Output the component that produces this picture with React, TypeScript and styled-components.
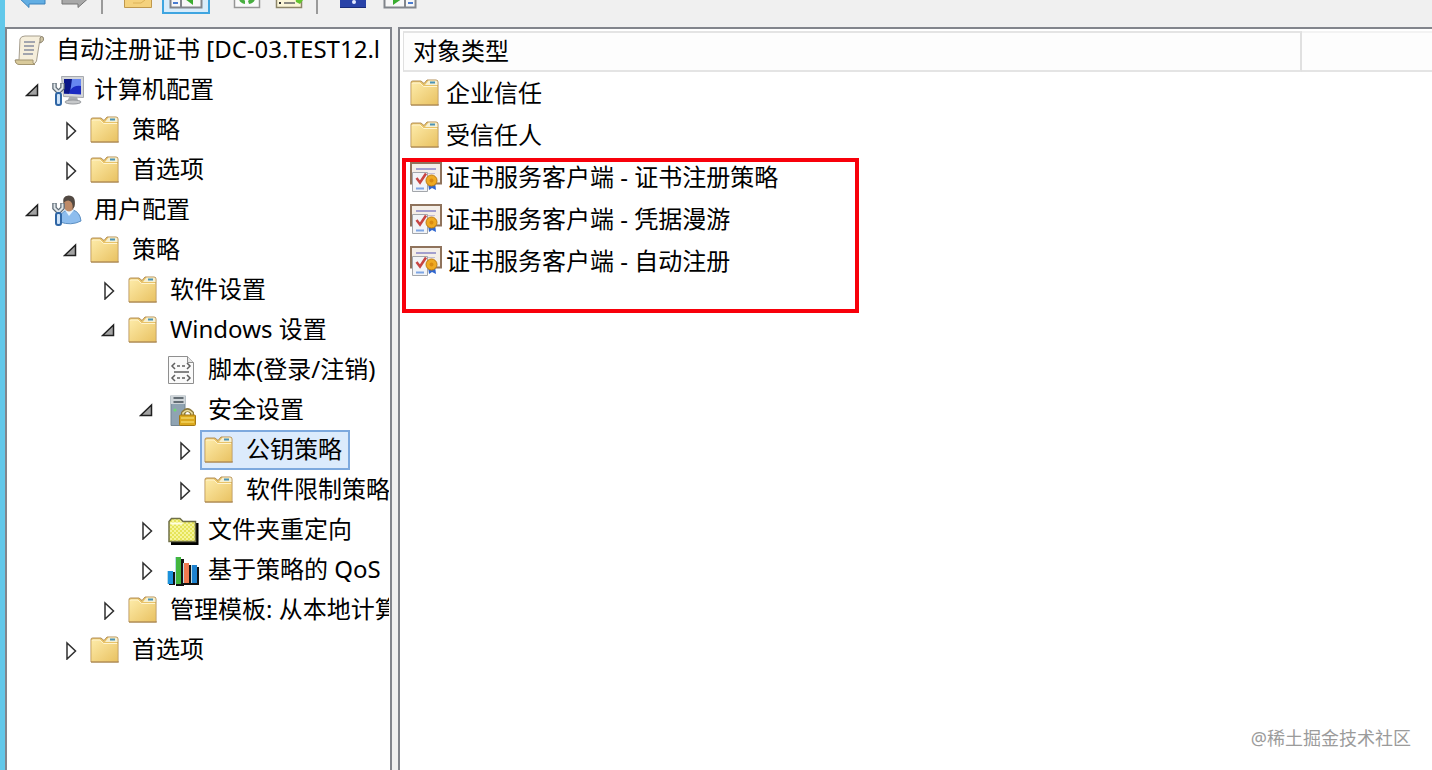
import React, { useState } from "react";
import styled, { createGlobalStyle, css } from "styled-components";

const GlobalStyle = createGlobalStyle`
  *, *::before, *::after { box-sizing: border-box; }
  body {
    margin: 0;
    background: #f0f0f0;
    color: #000;
    font-family: "Noto Sans", "Noto Sans CJK SC", sans-serif;
    font-size: 24px;
    line-height: 40px;
  }
`;

const Window = styled.div`
  position: relative;
  display: flex;
  flex-direction: column;
  height: 100vh;
  overflow: hidden;
  border-left: 5px solid #62c8ea;
`;

const Toolbar = styled.div`
  display: flex;
  flex: none;
  align-items: flex-end;
  height: 27px;
  padding: 0 5px 13px;
  overflow: hidden;
`;

const ToolGroup = styled.div<{ $gap?: number }>`
  display: flex;
  gap: ${(p) => p.$gap ?? 0}px;
  & + & { margin-left: 15px; }
`;

const ToolButton = styled.button<{ $active?: boolean }>`
  display: flex;
  justify-content: center;
  width: 44px;
  height: 44px;
  padding: 6px 0;
  border: 0;
  background: none;
  ${(p) =>
    p.$active &&
    css`
      width: 48px;
      padding: 4px 0;
      border: 2px solid #3fa5e0;
      background: #d9ecfa;
    `}
`;

const Separator = styled.div`
  width: 2px;
  height: 44px;
  margin: 0 13px 0 3px;
  background: #9a9a9a;
`;

const Panes = styled.div`
  display: flex;
  flex: 1;
  min-height: 0;
  gap: 6px;
`;

const TreePane = styled.nav`
  flex: none;
  width: 387px;
  padding: 1px 1px 0 0;
  background: #fff;
  border: solid #82858c;
  border-width: 2px 2px 0;
`;

const TreeClip = styled.div`
  overflow: hidden;
`;

const Branch = styled.ul`
  margin: 0;
  padding: 0;
  list-style: none;
`;

const TreeRow = styled.div<{ $level: number }>`
  display: flex;
  align-items: center;
  height: 40px;
  padding-left: ${(p) => (p.$level ? p.$level * 38 - 20 : 7)}px;
  white-space: nowrap;
`;

const Expander = styled.button`
  display: flex;
  flex: none;
  width: 20px;
  height: 20px;
  margin-right: 3px;
  padding: 0;
  border: 0;
  background: none;
`;

const ExpanderSpace = styled.span`
  flex: none;
  width: 23px;
`;

const NodeLabel = styled.a<{ $selected?: boolean; $root?: boolean }>`
  display: flex;
  align-items: center;
  gap: 10px;
  height: 40px;
  padding: 0 6px 0 ${(p) => (p.$root ? 0 : 4)}px;
  color: inherit;
  text-decoration: none;
  ${(p) =>
    p.$selected &&
    css`
      padding-left: 2px;
      border: 2px solid #7da9de;
      background: #dcebfc;
    `}
`;

const NodeName = styled.span`
  line-height: 38px;
  padding-bottom: 2px;
`;

const ListPane = styled.main`
  position: relative;
  flex: 1;
  min-width: 0;
  padding: 2px 0 0 3px;
  overflow: hidden;
  background: #fff;
  border: solid #82858c;
  border-width: 2px 0 0 2px;
`;

const ObjectTable = styled.table`
  width: 100%;
  table-layout: fixed;
  border-collapse: separate;
  border-spacing: 0;
`;

const HeaderCell = styled.th<{ $name?: boolean }>`
  width: ${(p) => (p.$name ? "899px" : "auto")};
  height: 41px;
  padding: 0 0 2px 9px;
  border-bottom: 2px solid #e4e4e4;
  border-top: 2px solid #f3f3f3;
  background: #fdfdfd;
  font-weight: 400;
  line-height: 34px;
  text-align: left;
  ${(p) =>
    p.$name &&
    css`
      border-right: 2px solid #e0e0e0;
      border-left: 1px solid #e0e0e0;
      border-top-color: #e4e4e4;
    `}
`;

const ObjectCell = styled.td`
  height: 42px;
  padding: 0 0 0 7px;
`;

const ObjectLink = styled.a`
  display: flex;
  align-items: center;
  gap: 4px;
  height: 42px;
  color: inherit;
  text-decoration: none;
  white-space: nowrap;
`;

const Highlight = styled.div`
  position: absolute;
  top: 129px;
  left: 2px;
  width: 457px;
  height: 155px;
  border: 4px solid #f8000a;
  pointer-events: none;
`;

const Watermark = styled.div`
  position: absolute;
  right: 21px;
  bottom: 20px;
  color: #9b9b9b;
  font-size: 18px;
  line-height: 24px;
`;

const Svg = styled.svg.attrs({ width: 32, height: 32, viewBox: "0 0 32 32", "aria-hidden": true })`
  flex: none;
  overflow: visible;
`;

const FolderIcon = () => (
  <Svg>
    <defs>
      <linearGradient id="folderFace" x1="0" y1="0" x2="1" y2="1">
        <stop offset="0" stopColor="#fdeba9" />
        <stop offset="1" stopColor="#e9c262" />
      </linearGradient>
    </defs>
    <path d="M1 28V5.500q0-1.500 1.500-1.500h8.500l3 2.500 3-3.500h9q2 0 2 2V28z" fill="#e8c368" stroke="#b4915a" />
    <path d="M16.500 6l2-2.500h7.500q1.500 0 1.500 1.500v3H15z" fill="#f6f0d2" />
    <path d="M20 5.500h5" stroke="#4b93b4" strokeWidth="2" />
    <path d="M1.500 27.500V7q0-1.500 1.500-1.500h7L13.500 9h14v18.500z" fill="url(#folderFace)" />
    <path d="M2 7q0-1 1-1h7l3.500 3.500h13.500" fill="none" stroke="#fff4cf" />
    <path d="M1 28h28" stroke="#a8834e" />
  </Svg>
);

const ScrollIcon = () => (
  <Svg>
    <path d="M6 5q1-3 5-3h15q4 1 2.500 5l-3 1-3 19q-1 3-4 3H4q-3-1-3-4h4z" fill="#f5eedb" stroke="#a69e8e" />
    <path d="M26 9V4q1-2.500 3-1 2 4-3 6z" fill="#d0c6a6" stroke="#8e8570" />
    <path d="M1.500 26H19q-1 4 2 4.500H5q-4-.5-3.500-4.500z" fill="#d9ca9b" stroke="#a39570" />
    <path d="M10 8h11M10 12h10M10 16h10M9 20h10" stroke="#878da0" strokeWidth="1.500" />
  </Svg>
);

const Wrench = () => (
  <>
    <path d="M2.500 9v5l4 4 4-4V9M6.500 18v3" fill="none" stroke="#5d6a75" strokeWidth="4.500" />
    <path d="M2.500 9.500v4.500l4 4 4-4V9.500M6.500 17v4" fill="none" stroke="#dfe5e9" strokeWidth="2" />
    <rect x="4" y="19" width="5" height="12" rx="2" fill="#cfe4fa" stroke="#2f66a5" strokeWidth="2" />
  </>
);

const ComputerIcon = () => (
  <Svg>
    <path d="M18 22h7l1 5H15z" fill="#a9acb0" />
    <ellipse cx="21" cy="28" rx="8" ry="2" fill="#c7c9cb" stroke="#96999d" />
    <path d="M9.500 2.500h22v21l-20-1z" fill="#d4d6d9" stroke="#a6a9ae" />
    <path d="M12 5h17v15.500l-17-1z" fill="#1b2bc2" />
    <path d="M12 5h9l-4 14.800-5-.3z" fill="#0b1788" />
    <path d="M20 5h9v7q-7-1-10.500 4z" fill="#6686f0" />
    <Wrench />
  </Svg>
);

const UserIcon = () => (
  <Svg>
    <path d="M8 27q0-9 7-11h6q7 2 8 11-10 5-21 1z" fill="#8dbdee" stroke="#5a8ec2" />
    <path d="M13 16l4 6 5-6z" fill="#e8f4fd" />
    <ellipse cx="17" cy="10" rx="5.500" ry="7.500" fill="#bd8a68" />
    <path d="M11.500 10Q9.500 2 16.500 1.500q8 0 6 11l-2 3q1-8-4-9-4 0-5 3.500z" fill="#524942" />
    <Wrench />
  </Svg>
);

const ScriptIcon = () => (
  <Svg>
    <path d="M2.500 2.500h19l6 6v21h-25z" fill="#fafafa" stroke="#8f8f8f" />
    <path d="M21.500 2.500v6h6" fill="#e5e5e5" stroke="#8f8f8f" />
    <path d="M9 9l-3 3 3 3M21 9l3 3-3 3M9 21l-3 3 3 3M21 21l3 3-3 3M11 12h3M16 12h3M11 24h3M16 24h3M8 18h15" fill="none" stroke="#5f5f5f" strokeWidth="1.500" />
  </Svg>
);

const SecurityIcon = () => (
  <Svg>
    <path d="M5 1.500h14v30H5z" fill="#8fa3b2" stroke="#738491" />
    <path d="M5 1h14v9H5z" fill="#d0d6da" />
    <path d="M7.500 4h10M7.500 8h10" stroke="#3f4b53" strokeWidth="1.500" />
    <circle cx="9" cy="16" r="1.500" fill="#6cdb72" />
    <path d="M17 23v-4q4.500-6 9 0v4" fill="none" stroke="#8d7a3d" strokeWidth="4" />
    <path d="M17 22v-3q4.500-5 9 0v3" fill="none" stroke="#eee1a0" strokeWidth="1.500" />
    <rect x="13.500" y="21" width="16" height="10.500" rx="1" fill="#dba91e" stroke="#a47813" />
    <path d="M15 24h13M15 28h13" stroke="#f4d360" strokeWidth="1.500" />
  </Svg>
);

const RedirectIcon = () => (
  <Svg>
    <defs>
      <pattern id="dither" width="4" height="4" patternUnits="userSpaceOnUse">
        <rect width="4" height="4" fill="#e6e45a" />
        <rect width="2" height="2" fill="#f6f59a" />
        <rect x="2" y="2" width="2" height="2" fill="#f6f59a" />
      </pattern>
    </defs>
    <path d="M5 29.500h26V9" fill="none" stroke="#000" strokeWidth="3" />
    <path d="M3 27.500v-20L5.500 4.500H14l3 3h12.500v20z" fill="url(#dither)" stroke="#6f6f48" strokeWidth="1.500" />
    <path d="M4.500 9.500h12" stroke="#fffde0" strokeWidth="2" />
  </Svg>
);

const BarsIcon = () => (
  <Svg>
    <path d="M3 31V18h6v13zM10 32V5h8v27zM18 31V11h8v20zM25 31V13h8v18z" fill="#111" />
    <path d="M1 17h6v13H1z" fill="#1b91dc" />
    <path d="M9 3h6v27H9z" fill="#42b63e" />
    <path d="M17 9h6v20h-6z" fill="#ef7a50" />
    <path d="M25 11h6v18h-6z" fill="#1d82cf" />
    <path d="M1.500 17v13M9.500 3v27M17.500 9v20M25.500 11v18" stroke="#b6dbe9" />
  </Svg>
);

const CertificateIcon = () => (
  <Svg>
    <path d="M1 2h30v20.500H1z" fill="#f4eee7" stroke="#8f735c" strokeWidth="2" />
    <path d="M6 8h20" stroke="#8885c5" strokeWidth="1.500" />
    <path d="M8 12.500h17" stroke="#c5bfd5" />
    <path d="M2.500 11.500h15v19h-15z" fill="#f2f4f7" stroke="#a3a6ab" />
    <path d="M6.500 17l3.500 4.500 6-9" fill="none" stroke="#c84543" strokeWidth="2.500" />
    <path d="M6 27.500h8" stroke="#7ea6e4" strokeWidth="2" />
    <path d="M18 22l1 7 3-2 4 2-1-8z" fill="#2f66cf" />
    <circle cx="21.500" cy="19.500" r="5.500" fill="#efaa22" stroke="#bd7c12" />
    <circle cx="21.500" cy="19.500" r="2" fill="#d98a10" />
  </Svg>
);

const ArrowIcon = ({ back }: { back?: boolean }) => (
  <Svg>
    <path
      d={back ? "M0 19L13 7v6h16v15H13v3.500z" : "M32 19L18 7v6H2v15h16v3.500z"}
      fill={back ? "#62aee3" : "#a8a8a8"}
      stroke={back ? "#3a81ba" : "#747474"}
    />
  </Svg>
);

const UpFolderIcon = () => (
  <Svg>
    <path d="M2.500 8h9l3 4h15v19.500h-27z" fill="#f5d27d" stroke="#bf984d" />
    <path d="M11 27h8l4-3" fill="none" stroke="#dcb258" />
  </Svg>
);

const PaneIcon = ({ right }: { right?: boolean }) => (
  <Svg>
    <path d="M.5 6.500h31v25H.5z" fill="#f7f7f7" stroke="#81858b" strokeWidth="2" />
    <path d={right ? "M21 7v24" : "M11 7v24"} stroke="#81858b" strokeWidth="2" />
    <path d={right ? "M24 22h5M24 27h5" : "M3 22h5M3 27h5"} stroke="#497bd0" strokeWidth="2" />
    <path d={right ? "M9 18v11l8-5.500z" : "M23 17v12l-8-6z"} fill="#39ac2f" />
  </Svg>
);

const RefreshIcon = () => (
  <Svg>
    <path d="M3.500 4h25v27.500h-25z" fill="#fafafa" stroke="#969696" strokeWidth="1.500" />
    <path d="M8 22q0 5 6 6v-3l-2-3zM24 22q0 5-6 6l-1-3 3-3z" fill="#48ae40" />
  </Svg>
);

const ExportIcon = () => (
  <Svg>
    <path d="M1.500 4h25v27.500h-25z" fill="#fbf6d8" stroke="#8c8568" strokeWidth="1.500" />
    <path d="M9 22h11M9 27h11" stroke="#676767" strokeWidth="1.500" />
    <path d="M4 22h2M4 27h2" stroke="#333" strokeWidth="2" />
    <path d="M20 20h11l-6 8-4-2z" fill="#64c52e" />
  </Svg>
);

const HelpIcon = () => (
  <Svg>
    <path d="M3 4h26v28H3z" fill="#2943a8" />
    <path d="M3 31.500h26" stroke="#192c78" />
    <circle cx="17" cy="26" r="2" fill="#e5ebff" />
  </Svg>
);

const ExpandMark = ({ open }: { open: boolean }) => (
  <svg width="20" height="20" viewBox="0 0 20 20" aria-hidden="true">
    {open ? (
      <path d="M12.500 5v10.500H1.500z" fill="#a3a3a3" stroke="#202020" strokeWidth="1.500" />
    ) : (
      <path d="M4 3v16l8.500-8z" fill="#fff" stroke="#303030" strokeWidth="1.500" />
    )}
  </svg>
);

type TreeNode = {
  name: string;
  icon: React.ComponentType;
  open?: boolean;
  leaf?: boolean;
  selected?: boolean;
  children?: TreeNode[];
};

const tree: TreeNode = {
  name: "自动注册证书 [DC-03.TEST12.l",
  icon: ScrollIcon,
  leaf: true,
  open: true,
  children: [
    {
      name: "计算机配置",
      icon: ComputerIcon,
      open: true,
      children: [
        { name: "策略", icon: FolderIcon },
        { name: "首选项", icon: FolderIcon },
      ],
    },
    {
      name: "用户配置",
      icon: UserIcon,
      open: true,
      children: [
        {
          name: "策略",
          icon: FolderIcon,
          open: true,
          children: [
            { name: "软件设置", icon: FolderIcon },
            {
              name: "Windows 设置",
              icon: FolderIcon,
              open: true,
              children: [
                { name: "脚本(登录/注销)", icon: ScriptIcon, leaf: true },
                {
                  name: "安全设置",
                  icon: SecurityIcon,
                  open: true,
                  children: [
                    { name: "公钥策略", icon: FolderIcon, selected: true },
                    { name: "软件限制策略", icon: FolderIcon },
                  ],
                },
                { name: "文件夹重定向", icon: RedirectIcon },
                { name: "基于策略的 QoS", icon: BarsIcon },
              ],
            },
            { name: "管理模板: 从本地计算", icon: FolderIcon },
          ],
        },
        { name: "首选项", icon: FolderIcon },
      ],
    },
  ],
};

const objects = [
  { name: "企业信任", icon: FolderIcon },
  { name: "受信任人", icon: FolderIcon },
  { name: "证书服务客户端 - 证书注册策略", icon: CertificateIcon },
  { name: "证书服务客户端 - 凭据漫游", icon: CertificateIcon },
  { name: "证书服务客户端 - 自动注册", icon: CertificateIcon },
];

function TreeItem({ node, level }: { node: TreeNode; level: number }) {
  const [open, setOpen] = useState(Boolean(node.open));
  const Icon = node.icon;
  return (
    <li>
      <TreeRow $level={level}>
        {!node.leaf && (
          <Expander aria-label={node.name} aria-expanded={open} onClick={() => setOpen(!open)}>
            <ExpandMark open={open} />
          </Expander>
        )}
        {node.leaf && level > 0 && <ExpanderSpace />}
        <NodeLabel href="#" $selected={node.selected} $root={level === 0}>
          <Icon />
          <NodeName>{node.name}</NodeName>
        </NodeLabel>
      </TreeRow>
      {open && node.children && (
        <Branch>
          {node.children.map((child) => (
            <TreeItem key={child.name} node={child} level={level + 1} />
          ))}
        </Branch>
      )}
    </li>
  );
}

export default function App() {
  return (
    <>
      <GlobalStyle />
      <Window>
        <Toolbar>
          <ToolGroup>
            <ToolButton aria-label="后退"><ArrowIcon back /></ToolButton>
            <ToolButton aria-label="前进"><ArrowIcon /></ToolButton>
          </ToolGroup>
          <Separator />
          <ToolGroup $gap={2}>
            <ToolButton aria-label="向上"><UpFolderIcon /></ToolButton>
            <ToolButton aria-label="控制台树" $active><PaneIcon /></ToolButton>
          </ToolGroup>
          <ToolGroup>
            <ToolButton aria-label="刷新"><RefreshIcon /></ToolButton>
            <ToolButton aria-label="导出列表"><ExportIcon /></ToolButton>
          </ToolGroup>
          <Separator />
          <ToolGroup $gap={3}>
            <ToolButton aria-label="帮助"><HelpIcon /></ToolButton>
            <ToolButton aria-label="操作窗格"><PaneIcon right /></ToolButton>
          </ToolGroup>
        </Toolbar>
        <Panes>
          <TreePane>
            <TreeClip>
              <Branch>
                <TreeItem node={tree} level={0} />
              </Branch>
            </TreeClip>
          </TreePane>
          <ListPane>
            <ObjectTable>
              <thead>
                <tr>
                  <HeaderCell scope="col" $name>对象类型</HeaderCell>
                  <HeaderCell as="td" />
                </tr>
              </thead>
              <tbody>
                {objects.map(({ name, icon: Icon }) => (
                  <tr key={name}>
                    <ObjectCell colSpan={2}>
                      <ObjectLink href="#">
                        <Icon />
                        {name}
                      </ObjectLink>
                    </ObjectCell>
                  </tr>
                ))}
              </tbody>
            </ObjectTable>
            <Highlight />
          </ListPane>
        </Panes>
        <Watermark>@稀土掘金技术社区</Watermark>
      </Window>
    </>
  );
}
